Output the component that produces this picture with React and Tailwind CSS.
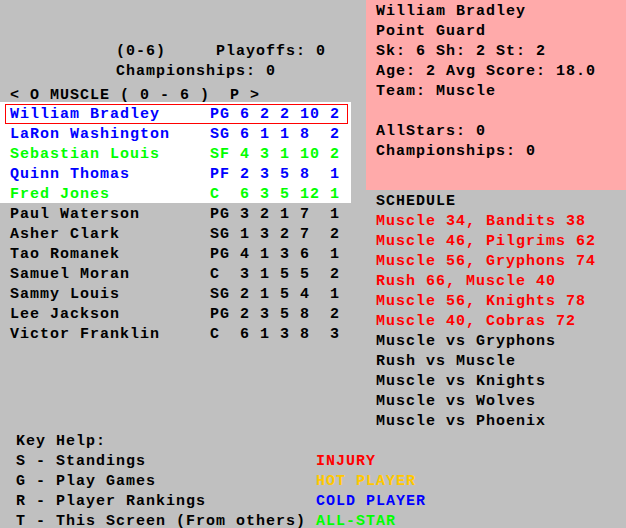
import React from 'react';

// --- Roster data ---
const starters = [
  { name: 'William Bradley', pos: 'PG', s: [6, 2, 2, 10, 2], color: 'text-[#0000ff]', selected: true },
  { name: 'LaRon Washington', pos: 'SG', s: [6, 1, 1, 8, 2], color: 'text-[#0000ff]' },
  { name: 'Sebastian Louis', pos: 'SF', s: [4, 3, 1, 10, 2], color: 'text-[#00ff00]' },
  { name: 'Quinn Thomas', pos: 'PF', s: [2, 3, 5, 8, 1], color: 'text-[#0000ff]' },
  { name: 'Fred Jones', pos: 'C', s: [6, 3, 5, 12, 1], color: 'text-[#00ff00]' },
];

const bench = [
  { name: 'Paul Waterson', pos: 'PG', s: [3, 2, 1, 7, 1] },
  { name: 'Asher Clark', pos: 'SG', s: [1, 3, 2, 7, 2] },
  { name: 'Tao Romanek', pos: 'PG', s: [4, 1, 3, 6, 1] },
  { name: 'Samuel Moran', pos: 'C', s: [3, 1, 5, 5, 2] },
  { name: 'Sammy Louis', pos: 'SG', s: [2, 1, 5, 4, 1] },
  { name: 'Lee Jackson', pos: 'PG', s: [2, 3, 5, 8, 2] },
  { name: 'Victor Franklin', pos: 'C', s: [6, 1, 3, 8, 3] },
];

const results = [
  'Muscle 34, Bandits 38',
  'Muscle 46, Pilgrims 62',
  'Muscle 56, Gryphons 74',
  'Rush 66, Muscle 40',
  'Muscle 56, Knights 78',
  'Muscle 40, Cobras 72',
];

const upcoming = [
  'Muscle vs Gryphons',
  'Rush vs Muscle',
  'Muscle vs Knights',
  'Muscle vs Wolves',
  'Muscle vs Phoenix',
];

const keys = [
  ['S - Standings', 'INJURY', 'text-[#ff0000]'],
  ['G - Play Games', 'HOT PLAYER', 'text-[#ffc800]'],
  ['R - Player Rankings', 'COLD PLAYER', 'text-[#0000ff]'],
  ['T - This Screen (From others)', 'ALL-STAR', 'text-[#00ff00]'],
];

// one 20px text line, glyphs nudged down a little to sit like the original
function Line({ className = '', children }) {
  return <div className={`h-[20px] leading-[23px] whitespace-pre ${className}`}>{children}</div>;
}

function PlayerRow({ p, color = 'text-black', selected = false }) {
  return (
    <div
      className={`ml-[5px] w-[343px] h-[20px] border pl-[4px] flex leading-[20px] ${
        selected ? 'border-[#ff0000]' : 'border-transparent'
      } ${color}`}
    >
      <span className="w-[200px]">{p.name}</span>
      <span className="w-[30px]">{p.pos}</span>
      <span className="w-[20px]">{p.s[0]}</span>
      <span className="w-[20px]">{p.s[1]}</span>
      <span className="w-[20px]">{p.s[2]}</span>
      <span className="w-[30px]">{p.s[3]}</span>
      <span>{p.s[4]}</span>
    </div>
  );
}

export default function App() {
  return (
    <div className="w-[626px] h-[528px] overflow-hidden bg-[#c0c0c0] text-black font-bold text-[15px] tracking-[1px] font-['Liberation_Mono',monospace]">
      <div className="flex">
        {/* Team roster */}
        <div className="w-[366px] pt-[40px]">
          <Line className="pl-[116px]">(0-6)     Playoffs: 0</Line>
          <Line className="pl-[116px]">Championships: 0</Line>
          <Line className="pl-[10px] mt-[4px] !h-[18px]">{'< O MUSCLE ( 0 - 6 )  P >'}</Line>

          <div className="bg-white w-[351px] h-[101px] pt-[2px]">
            {starters.map((p) => (
              <PlayerRow key={p.name} p={p} color={p.color} selected={p.selected} />
            ))}
          </div>
          <div className="mt-[1px]">
            {bench.map((p) => (
              <PlayerRow key={p.name} p={p} />
            ))}
          </div>
        </div>

        {/* Player card + schedule */}
        <div className="w-[260px]">
          <div className="bg-[#ffaaaa] h-[190px] pl-[10px]">
            <Line>William Bradley</Line>
            <Line>Point Guard</Line>
            <Line>Sk: 6 Sh: 2 St: 2</Line>
            <Line>Age: 2 Avg Score: 18.0</Line>
            <Line>Team: Muscle</Line>
            <Line />
            <Line>AllStars: 0</Line>
            <Line>Championships: 0</Line>
          </div>
          <div className="pl-[10px]">
            <Line>SCHEDULE</Line>
            {results.map((r) => (
              <Line key={r} className="text-[#ff0000]">{r}</Line>
            ))}
            {upcoming.map((r) => (
              <Line key={r}>{r}</Line>
            ))}
          </div>
        </div>
      </div>

      {/* Key help */}
      <div className="pl-[16px]">
        <Line>Key Help:</Line>
        {keys.map(([k, label, color]) => (
          <Line key={k} className="flex">
            <span className="w-[300px]">{k}</span>
            <span className={color}>{label}</span>
          </Line>
        ))}
      </div>
    </div>
  );
}
